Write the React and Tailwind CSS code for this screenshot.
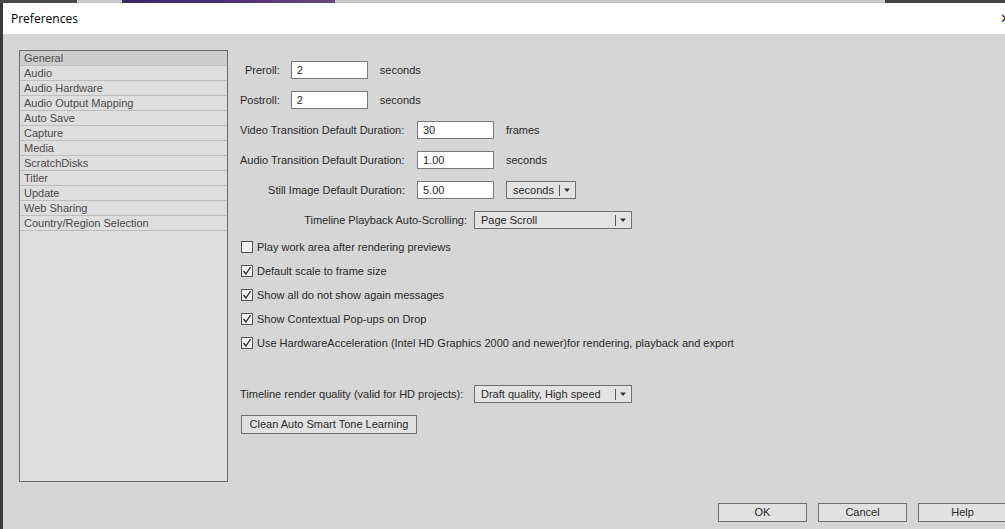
import React from "react";

const SECTIONS = [
  "General",
  "Audio",
  "Audio Hardware",
  "Audio Output Mapping",
  "Auto Save",
  "Capture",
  "Media",
  "ScratchDisks",
  "Titler",
  "Update",
  "Web Sharing",
  "Country/Region Selection",
];

const CHECKS = [
  { label: "Play work area after rendering previews", checked: false },
  { label: "Default scale to frame size", checked: true },
  { label: "Show all do not show again messages", checked: true },
  { label: "Show Contextual Pop-ups on Drop", checked: true },
  {
    label:
      "Use HardwareAcceleration (Intel HD Graphics 2000 and newer)for rendering, playback and export",
    checked: true,
  },
];

const TextBox = ({ value }) => (
  <div className="w-[77px] h-[18px] bg-white border border-[#7a7a7a] flex items-center pl-[5px] text-[11px] text-[#2a2a2a]">
    {value}
  </div>
);

const Dropdown = ({ value, width }) => (
  <div
    className={`${width} h-[18px] bg-[#e3e3e3] border border-[#707070] flex items-center text-[11px] text-[#2a2a2a]`}
  >
    <span className="flex-1 pl-[6px] whitespace-nowrap">{value}</span>
    <span className="w-px h-[11px] bg-[#555]" />
    <svg width="15" height="8" viewBox="0 0 15 8" className="shrink-0">
      <path d="M4 2.5 L10 2.5 L7 6 Z" fill="#333" />
    </svg>
  </div>
);

const CheckBox = ({ checked }) => (
  <div className="w-[12px] h-[12px] border border-[#555] bg-[#f2f2f2] flex items-center justify-center shrink-0">
    {checked && (
      <svg width="10" height="10" viewBox="0 0 10 10">
        <path d="M1.5 5 L4 8 L8.5 1" fill="none" stroke="#222" strokeWidth="1.3" />
      </svg>
    )}
  </div>
);

const Button = ({ children, className = "" }) => (
  <div
    className={`h-[19px] bg-[#e1e1e1] border border-[#707070] flex items-center justify-center text-[11px] text-[#2a2a2a] shrink-0 ${className}`}
  >
    {children}
  </div>
);

export default function App() {
  return (
    <div
      className="w-[1005px] h-[529px] overflow-hidden bg-[#3a3a3a] flex flex-col"
      style={{ fontFamily: "'Liberation Sans', Arial, sans-serif" }}
    >
      {/* desktop strip behind the dialog */}
      <div className="h-[3px] flex shrink-0">
        <div className="w-[77px] bg-[#4a4a4a]" />
        <div className="w-[45px] bg-[#c9c9c9]" />
        <div className="w-[213px] bg-gradient-to-r from-[#3b2a6a] via-[#4a2f75] to-[#6a4a7a]" />
        <div className="w-[550px] bg-[#c8c8c8]" />
        <div className="flex-1 bg-[#444]" />
      </div>

      <div className="flex flex-1 min-h-0">
        <div className="w-[3px] bg-[#3a3a3a] shrink-0" />

        {/* dialog window */}
        <div className="flex-1 flex flex-col bg-[#d6d6d6]">
          {/* title bar */}
          <div className="h-[31px] bg-white flex items-center justify-between pl-[8px] shrink-0">
            <span
              className="text-[12px] text-black"
              style={{ fontFamily: "'Open Sans', 'Noto Sans', sans-serif" }}
            >
              Preferences
            </span>
            <span className="text-[13px] text-[#222] -mr-[4px]">✕</span>
          </div>

          {/* body */}
          <div className="flex pl-[16px] pt-[16px]">
            {/* section list */}
            <div className="w-[209px] h-[432px] border border-[#6b6b6b] bg-[#dedede] shrink-0">
              {SECTIONS.map((s, i) => (
                <div
                  key={s}
                  className={`h-[15px] border-b border-[#bdbdbd] pl-[4px] text-[11px] leading-[14px] text-[#4a4a4a] ${
                    i === 0 ? "bg-[#cdcdcd]" : ""
                  }`}
                >
                  {s}
                </div>
              ))}
            </div>

            {/* settings */}
            <div className="ml-[12px] pt-[5px] flex flex-col text-[11px] text-[#2a2a2a]">
              <div className="h-[30px] flex items-center pl-[5px]">
                <span>Preroll:</span>
                <div className="ml-[11px]">
                  <TextBox value="2" />
                </div>
                <span className="ml-[12px]">seconds</span>
              </div>
              <div className="h-[30px] flex items-center">
                <span>Postroll:</span>
                <div className="ml-[11px]">
                  <TextBox value="2" />
                </div>
                <span className="ml-[12px]">seconds</span>
              </div>
              <div className="h-[30px] flex items-center">
                <span className="w-[177px]">Video Transition Default Duration:</span>
                <TextBox value="30" />
                <span className="ml-[12px]">frames</span>
              </div>
              <div className="h-[30px] flex items-center">
                <span className="w-[177px]">Audio Transition Default Duration:</span>
                <TextBox value="1.00" />
                <span className="ml-[12px]">seconds</span>
              </div>
              <div className="h-[30px] flex items-center">
                <span className="w-[177px] text-right pr-[12px]">Still Image Default Duration:</span>
                <TextBox value="5.00" />
                <div className="ml-[12px]">
                  <Dropdown value="seconds" width="w-[70px]" />
                </div>
              </div>
              <div className="h-[30px] flex items-center">
                <span className="w-[234px] text-right pr-[7px]">Timeline Playback Auto-Scrolling:</span>
                <Dropdown value="Page Scroll" width="w-[158px]" />
              </div>

              {CHECKS.map((c) => (
                <div key={c.label} className="h-[24px] flex items-center pl-[1px] gap-[4px] whitespace-nowrap">
                  <CheckBox checked={c.checked} />
                  <span>{c.label}</span>
                </div>
              ))}

              <div className="h-[24px] mt-[27px] flex items-center">
                <span className="w-[234px]">Timeline render quality (valid for HD projects):</span>
                <Dropdown value="Draft quality, High speed" width="w-[158px]" />
              </div>
              <div className="mt-[9px] pl-[1px]">
                <Button className="w-[176px]">Clean Auto Smart Tone Learning</Button>
              </div>
            </div>
          </div>

          {/* dialog buttons */}
          <div className="flex gap-[11px] pl-[715px] mt-[21px]">
            <Button className="w-[89px] border-[#3c7fb1]">OK</Button>
            <Button className="w-[89px]">Cancel</Button>
            <Button className="w-[89px]">Help</Button>
          </div>
        </div>
      </div>
    </div>
  );
}
